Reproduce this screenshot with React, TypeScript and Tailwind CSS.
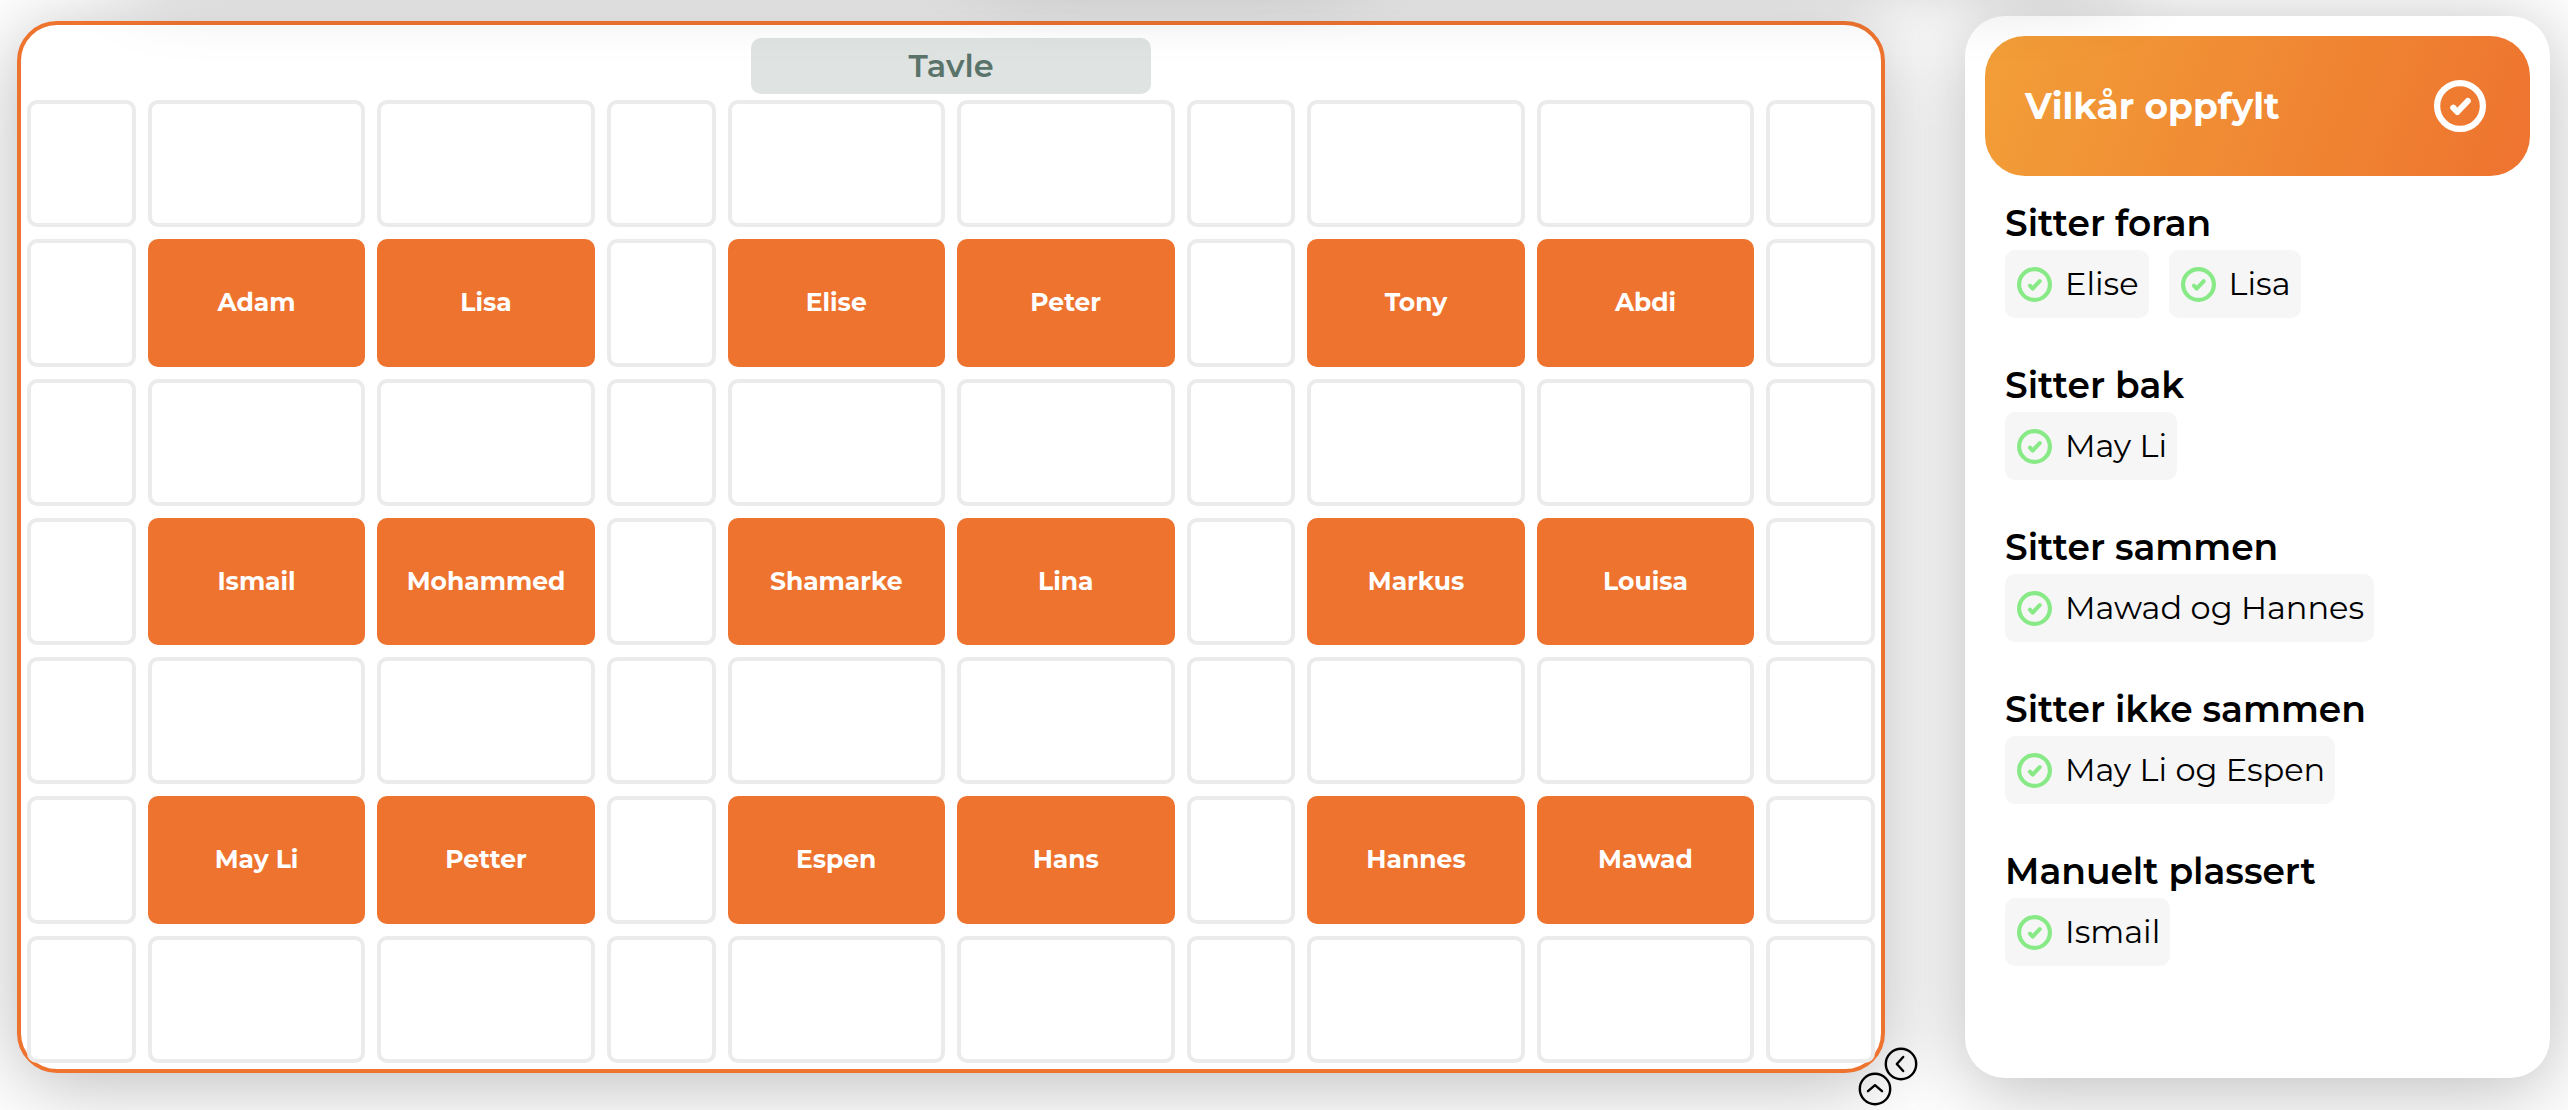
const rows: string[][] = [
  [],
  ["Adam", "Lisa", "Elise", "Peter", "Tony", "Abdi"],
  [],
  ["Ismail", "Mohammed", "Shamarke", "Lina", "Markus", "Louisa"],
  [],
  ["May Li", "Petter", "Espen", "Hans", "Hannes", "Mawad"],
  [],
];

const wideColumns = [1, 2, 4, 5, 7, 8];

const conditions = [
  { title: "Sitter foran", items: ["Elise", "Lisa"] },
  { title: "Sitter bak", items: ["May Li"] },
  { title: "Sitter sammen", items: ["Mawad og Hannes"] },
  { title: "Sitter ikke sammen", items: ["May Li og Espen"] },
  { title: "Manuelt plassert", items: ["Ismail"] },
];

function CheckCircle({ className }: { className: string }) {
  return (
    <svg viewBox="0 0 50 50" fill="none" stroke="currentColor" strokeLinecap="round" strokeLinejoin="round" className={className} aria-hidden="true">
      <circle cx="25" cy="25" r="22" strokeWidth="6" />
      <path d="M18.500 26.600L22.400 30.800L32.500 20.200" strokeWidth="5.8" />
    </svg>
  );
}

function ArrowCircle({ d }: { d: string }) {
  return (
    <svg viewBox="0 0 34 34" fill="none" stroke="black" strokeWidth="2.4" strokeLinecap="round" strokeLinejoin="round" className="size-[34px]" aria-hidden="true">
      <circle cx="17" cy="17" r="15.2" />
      <path d={d} />
    </svg>
  );
}

function Board() {
  return (
    <section className="relative flex min-w-0 flex-1 flex-col rounded-[40px] border-4 border-[#ee732f] bg-white px-1.5 pt-[13px] pb-1.5 shadow-[0_10px_80px_rgba(0,0,0,0.28)]">
      <h2 className="mx-auto mb-1.5 flex h-14 w-[400px] items-center justify-center rounded-[10px] bg-[#dfe3e1] text-[32px] font-semibold text-[#5a736b]">
        Tavle
      </h2>
      <div className="grid flex-1 auto-rows-[minmax(100px,1fr)] grid-cols-[1fr_2fr_2fr_1fr_2fr_2fr_1fr_2fr_2fr_1fr] gap-3">
        {rows.map((names, r) =>
          Array.from({ length: 10 }, (_, c) => {
            const name = names[wideColumns.indexOf(c)];
            return name ? (
              <button key={`${r}-${c}`} type="button" className="min-w-0 rounded-[10px] bg-[#ee732f] text-[25px] font-bold text-white">
                {name}
              </button>
            ) : (
              <div key={`${r}-${c}`} className="min-w-0 rounded-[10px] border-4 border-[#ebebeb]" />
            );
          }),
        )}
      </div>
      <button type="button" aria-label="Færre kolonner" className="absolute -right-[37px] -bottom-3">
        <ArrowCircle d="M19.200 10L12.800 17l6.400 7" />
      </button>
      <button type="button" aria-label="Færre rader" className="absolute -right-[11px] -bottom-[37px]">
        <ArrowCircle d="M10 19.200L17 13.200l7 6" />
      </button>
    </section>
  );
}

function Conditions() {
  return (
    <aside className="w-[585px] shrink-0 rounded-[40px] bg-white p-5 shadow-[0_10px_80px_rgba(0,0,0,0.28)]">
      <div className="flex h-[140px] items-center justify-between rounded-[40px] bg-linear-[110deg,#f29f38,#ee732f] pr-11 pl-10 text-white">
        <h1 className="text-[36px] font-bold">Vilkår oppfylt</h1>
        <CheckCircle className="size-[52px]" />
      </div>
      <div className="flex flex-col gap-11 px-5 pt-6">
        {conditions.map(({ title, items }) => (
          <section key={title}>
            <h2 className="h-[50px] text-[36px] leading-[46px] font-semibold">{title}</h2>
            <ul className="flex gap-5">
              {items.map((item) => (
                <li key={item} className="flex h-[68px] items-center rounded-[10px] bg-[#f6f6f6] pr-2.5 pl-3 text-[32px]">
                  <CheckCircle className="mr-[13px] size-[35px] text-[#88ea86]" />
                  {item}
                </li>
              ))}
            </ul>
          </section>
        ))}
      </div>
    </aside>
  );
}

export default function App() {
  return (
    <div className="relative overflow-hidden bg-white font-['Montserrat','Open_Sans',sans-serif] text-black">
      <main className="flex min-h-screen gap-20 pt-4 pr-[18px] pb-8 pl-[17px]">
        <div className="flex min-w-0 flex-1 py-[5px]">
          <Board />
        </div>
        <Conditions />
      </main>
      <div className="pointer-events-none absolute -top-40 right-[17%] left-[5%] h-32 rounded-[40px] shadow-[0_10px_80px_rgba(0,0,0,0.28)]" />
      <div className="pointer-events-none absolute -top-44 right-[47%] left-[38%] h-32 rounded-[40px] shadow-[0_10px_80px_rgba(0,0,0,0.28)]" />
    </div>
  );
}
